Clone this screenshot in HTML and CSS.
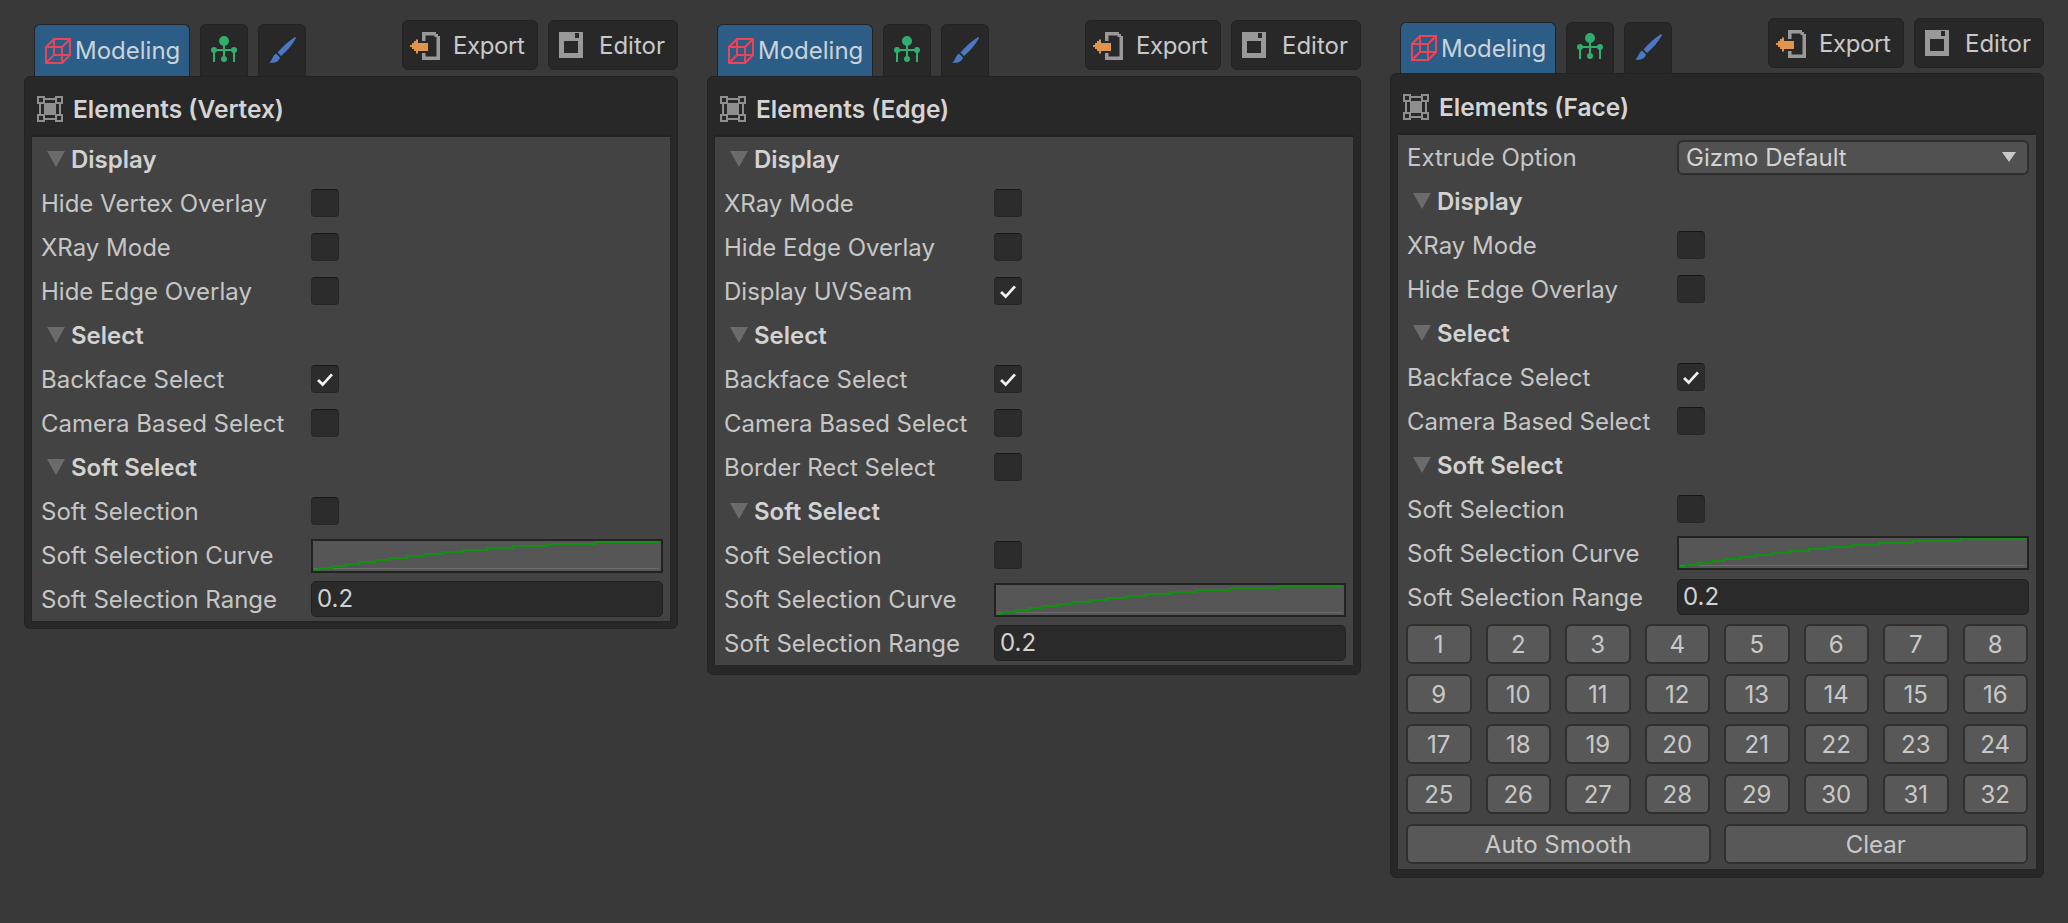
FILE: index.html
```html
<!DOCTYPE html>
<html lang="en">
<head>
<meta charset="utf-8">
<title>Elements</title>
<link rel="stylesheet" href="styles.css">
</head>
<body>
<svg class="defs" aria-hidden="true">
  <symbol id="i-cube" viewBox="0 0 26 26">
    <path d="M1 9H17V25H1ZM9 1H25V17H9ZM1 9L9 1M17 9L25 1M17 25L25 17M1 25L9 17M9 1V17H17" fill="none" stroke="#ea4458" stroke-width="2"/>
  </symbol>
  <symbol id="i-tree" viewBox="0 0 32 32">
    <circle cx="16" cy="6" r="5"/><circle cx="6" cy="15" r="3"/><circle cx="26" cy="15" r="3"/><circle cx="16" cy="24" r="3"/>
    <path d="M6 14H26V16H7V27H5V15ZM15 8H17V24H15ZM25 15H27V27H25Z"/>
  </symbol>
  <symbol id="i-brush" viewBox="0 0 32 32">
    <path d="M29 2C30 2 30 3 29.500 4C26 10 21 16 15 21L11.500 17.500C17 11 23 6 29 2Z"/>
    <path d="M10 18.500L14 22.500C13 27 8 28.500 3 27.500C6 26.500 6.500 20.500 10 18.500Z"/>
  </symbol>
  <symbol id="i-export" viewBox="0 0 32 30">
    <path d="M13 2H27V4H29V6H31V30H13V23H16.500V26.500H27.500V7H25.500V5.500H16.500V11H13Z" fill="#999"/>
    <path d="M1 15H3V13H5V11H7V9.500H9V11H9V13H19V21H9V23.500H7V21H5V19H3V17H1Z" fill="#e0954f"/>
  </symbol>
  <symbol id="i-window" viewBox="0 0 24 26">
    <path fill-rule="evenodd" d="M0 0H24V26H0ZM5 9V21H19V9ZM16 1V6H20V1Z" fill="#999"/>
  </symbol>
  <symbol id="i-elements" viewBox="0 0 26 26">
    <path d="M7 7H19V19H7Z" fill="#8f8f8f"/>
    <path d="M1 1H7V7H1ZM19 1H25V7H19ZM1 19H7V25H1ZM19 19H25V25H19ZM7 3H19M7 23H19M3 7V19M23 7V19" fill="none" stroke="#8f8f8f" stroke-width="2"/>
  </symbol>
  <symbol id="i-curve" viewBox="0 0 348 30" preserveAspectRatio="none">
    <path d="M1 27.500H346" stroke="#6c6c6c" stroke-width="1" fill="none"/>
    <path d="M1 29H6V27H19V25H33V23H46V21H62V19H76V17H94V15H111V13H130V11H150V9H174V7H200V5H234V3H282V1H346" stroke="#138f13" stroke-width="2" fill="none" shape-rendering="crispEdges"/>
  </symbol>
  <symbol id="i-check" viewBox="0 0 28 28">
    <path d="M6.500 15L11.500 20L21.500 9" fill="none" stroke="#f0f0f0" stroke-width="3"/>
  </symbol>
</svg>

<main class="stage">

  <section class="col col-vertex">
    <div class="top">
      <nav class="tabs">
        <div class="tab tab-active"><svg class="ico-cube"><use href="#i-cube"/></svg><span>Modeling</span></div>
        <div class="tab tab-icon"><svg class="ico-tree"><use href="#i-tree"/></svg></div>
        <div class="tab tab-icon"><svg class="ico-brush"><use href="#i-brush"/></svg></div>
      </nav>
      <div class="actions">
        <div class="action action-export"><svg class="ico-export"><use href="#i-export"/></svg><span>Export</span></div>
        <div class="action action-editor"><svg class="ico-window"><use href="#i-window"/></svg><span>Editor</span></div>
      </div>
    </div>
    <div class="panel">
      <header class="panel-head"><svg class="ico-elements"><use href="#i-elements"/></svg><h2>Elements (Vertex)</h2></header>
      <div class="panel-body">
        <div class="section"><i class="tri"></i>Display</div>
        <div class="row"><label>Hide Vertex Overlay</label><span class="check"></span></div>
        <div class="row"><label>XRay Mode</label><span class="check"></span></div>
        <div class="row"><label>Hide Edge Overlay</label><span class="check"></span></div>
        <div class="section"><i class="tri"></i>Select</div>
        <div class="row"><label>Backface Select</label><span class="check"><svg><use href="#i-check"/></svg></span></div>
        <div class="row"><label>Camera Based Select</label><span class="check"></span></div>
        <div class="section"><i class="tri"></i>Soft Select</div>
        <div class="row"><label>Soft Selection</label><span class="check"></span></div>
        <div class="row"><label>Soft Selection Curve</label><span class="curve"><svg><use href="#i-curve"/></svg></span></div>
        <div class="row row-range"><label>Soft Selection Range</label><span class="field">0.2</span></div>
      </div>
    </div>
  </section>

  <section class="col col-edge">
    <div class="top">
      <nav class="tabs">
        <div class="tab tab-active"><svg class="ico-cube"><use href="#i-cube"/></svg><span>Modeling</span></div>
        <div class="tab tab-icon"><svg class="ico-tree"><use href="#i-tree"/></svg></div>
        <div class="tab tab-icon"><svg class="ico-brush"><use href="#i-brush"/></svg></div>
      </nav>
      <div class="actions">
        <div class="action action-export"><svg class="ico-export"><use href="#i-export"/></svg><span>Export</span></div>
        <div class="action action-editor"><svg class="ico-window"><use href="#i-window"/></svg><span>Editor</span></div>
      </div>
    </div>
    <div class="panel">
      <header class="panel-head"><svg class="ico-elements"><use href="#i-elements"/></svg><h2>Elements (Edge)</h2></header>
      <div class="panel-body">
        <div class="section"><i class="tri"></i>Display</div>
        <div class="row"><label>XRay Mode</label><span class="check"></span></div>
        <div class="row"><label>Hide Edge Overlay</label><span class="check"></span></div>
        <div class="row"><label>Display UVSeam</label><span class="check"><svg><use href="#i-check"/></svg></span></div>
        <div class="section"><i class="tri"></i>Select</div>
        <div class="row"><label>Backface Select</label><span class="check"><svg><use href="#i-check"/></svg></span></div>
        <div class="row"><label>Camera Based Select</label><span class="check"></span></div>
        <div class="row"><label>Border Rect Select</label><span class="check"></span></div>
        <div class="section"><i class="tri"></i>Soft Select</div>
        <div class="row"><label>Soft Selection</label><span class="check"></span></div>
        <div class="row"><label>Soft Selection Curve</label><span class="curve"><svg><use href="#i-curve"/></svg></span></div>
        <div class="row row-range"><label>Soft Selection Range</label><span class="field">0.2</span></div>
      </div>
    </div>
  </section>

  <section class="col col-face">
    <div class="top">
      <nav class="tabs">
        <div class="tab tab-active"><svg class="ico-cube"><use href="#i-cube"/></svg><span>Modeling</span></div>
        <div class="tab tab-icon"><svg class="ico-tree"><use href="#i-tree"/></svg></div>
        <div class="tab tab-icon"><svg class="ico-brush"><use href="#i-brush"/></svg></div>
      </nav>
      <div class="actions">
        <div class="action action-export"><svg class="ico-export"><use href="#i-export"/></svg><span>Export</span></div>
        <div class="action action-editor"><svg class="ico-window"><use href="#i-window"/></svg><span>Editor</span></div>
      </div>
    </div>
    <div class="panel">
      <header class="panel-head"><svg class="ico-elements"><use href="#i-elements"/></svg><h2>Elements (Face)</h2></header>
      <div class="panel-body">
        <div class="row"><label>Extrude Option</label><span class="select">Gizmo Default<i class="caret"></i></span></div>
        <div class="section"><i class="tri"></i>Display</div>
        <div class="row"><label>XRay Mode</label><span class="check"></span></div>
        <div class="row"><label>Hide Edge Overlay</label><span class="check"></span></div>
        <div class="section"><i class="tri"></i>Select</div>
        <div class="row"><label>Backface Select</label><span class="check"><svg><use href="#i-check"/></svg></span></div>
        <div class="row"><label>Camera Based Select</label><span class="check"></span></div>
        <div class="section"><i class="tri"></i>Soft Select</div>
        <div class="row"><label>Soft Selection</label><span class="check"></span></div>
        <div class="row"><label>Soft Selection Curve</label><span class="curve"><svg><use href="#i-curve"/></svg></span></div>
        <div class="row row-range"><label>Soft Selection Range</label><span class="field">0.2</span></div>
        <div class="groups">
          <button>1</button><button>2</button><button>3</button><button>4</button><button>5</button><button>6</button><button>7</button><button>8</button>
          <button>9</button><button>10</button><button>11</button><button>12</button><button>13</button><button>14</button><button>15</button><button>16</button>
          <button>17</button><button>18</button><button>19</button><button>20</button><button>21</button><button>22</button><button>23</button><button>24</button>
          <button>25</button><button>26</button><button>27</button><button>28</button><button>29</button><button>30</button><button>31</button><button>32</button>
        </div>
        <div class="wide">
          <button>Auto Smooth</button><button>Clear</button>
        </div>
      </div>
    </div>
  </section>

</main>
</body>
</html>
```

FILE: styles.css
```css
* { box-sizing: border-box; }

html, body {
  margin: 0;
  height: 100%;
  background: #393939;
}

body {
  font-family: Inter, "Noto Sans", sans-serif;
  font-size: 24px;
  color: #c6c6c6;
  overflow: hidden;
}

.defs {
  position: absolute;
  width: 0;
  height: 0;
}

.stage {
  display: flex;
  align-items: flex-start;
  gap: 29px;
  padding-left: 24px;
}

.col {
  width: 654px;
  flex: none;
}

.col-vertex, .col-edge { padding-top: 20px; }
.col-face { padding-top: 18px; }

/* top strip */
.top {
  display: flex;
  justify-content: space-between;
  height: 56px;
}

.col-face .top { height: 55px; }

.tabs {
  display: flex;
  align-items: flex-end;
  gap: 10px;
  padding-left: 10px;
}

.tab {
  height: 52px;
  display: flex;
  align-items: center;
  background: #282828;
  border: 1px solid #232323;
  border-bottom: 0;
  border-radius: 6px 6px 0 0;
}

.col-face .tab { height: 51px; }

.tab-active {
  width: 156px;
  padding-left: 10px;
  gap: 4px;
  background: #2c5d87;
  color: #c9d3db;
}

.tab-icon {
  width: 48px;
  justify-content: center;
}

.ico-cube { width: 26px; height: 26px; flex: none; }
.ico-tree { width: 32px; height: 32px; fill: #2fae70; }
.ico-brush { width: 32px; height: 32px; fill: #4a78c2; }

.actions {
  display: flex;
  gap: 10px;
  height: 50px;
}

.action {
  height: 50px;
  display: flex;
  align-items: center;
  background: #282828;
  border: 1px solid #232323;
  border-radius: 6px;
  color: #c8c8c8;
}

.action-export { width: 136px; padding-left: 6px; gap: 12px; letter-spacing: -0.4px; }
.action-editor { width: 130px; padding-left: 10px; gap: 16px; }

.ico-export { width: 32px; height: 30px; flex: none; }
.ico-window { width: 24px; height: 26px; flex: none; }

/* panel */
.panel {
  background: #282828;
  border: 1px solid #232323;
  border-radius: 6px;
  padding: 0 7px 8px;
}

.col-vertex .panel { padding-bottom: 7px; }
.col-edge .panel { padding-bottom: 9px; }

.panel-head {
  height: 59px;
  display: flex;
  align-items: center;
  gap: 10px;
  padding: 6px 5px 0;
}

.col-vertex .panel-head, .col-edge .panel-head {
  height: 58px;
  padding-top: 5px;
}

.ico-elements { width: 26px; height: 26px; flex: none; }

h2 {
  margin: 0;
  font-size: 24.500px;
  font-weight: 600;
  color: #d4d4d4;
}

.panel-body {
  background: #434343;
  border-top: 2px solid #232323;
  box-shadow: 0 0 0 1px #252525;
}

.row, .section {
  height: 44px;
  display: flex;
  align-items: center;
  padding: 0 7px 0 9px;
}

.row label {
  width: 270px;
  flex: none;
}

.row-range {
  padding-top: 4px;
  padding-bottom: 4px;
}

.section {
  font-weight: 600;
  color: #d2d2d2;
}

.tri {
  width: 0;
  height: 0;
  margin-left: 6px;
  margin-right: 6px;
  border-style: solid;
  border-width: 16px 9px 0;
  border-color: #6b6b6b transparent transparent;
}

.check {
  width: 28px;
  height: 28px;
  flex: none;
  background: #2c2c2c;
  border: 1px solid #272727;
  border-top-color: #171717;
  border-radius: 4px;
  display: flex;
}

.check svg { width: 100%; height: 100%; }

.curve {
  width: 352px;
  height: 34px;
  flex: none;
  background: #565656;
  border: 2px solid #232323;
  display: flex;
}

.col-vertex .curve, .col-edge .curve { margin-top: 2px; }

.curve svg { width: 100%; height: 100%; }

.field {
  width: 352px;
  height: 36px;
  flex: none;
  line-height: 34px;
  padding: 0 5px;
  background: #2a2a2a;
  border: 1px solid #212121;
  border-radius: 5px;
  color: #d2d2d2;
}

.select {
  width: 352px;
  height: 35px;
  flex: none;
  display: flex;
  align-items: center;
  justify-content: space-between;
  padding: 0 7px;
  background: #515151;
  border: 2px solid #2e2e2e;
  border-radius: 6px;
  color: #d2d2d2;
}

.caret {
  width: 0;
  height: 0;
  margin-right: 4px;
  border-style: solid;
  border-width: 10px 7px 0;
  border-color: #c8c8c8 transparent transparent;
}

.groups {
  display: grid;
  grid-template-columns: repeat(8, 1fr);
  gap: 10px 14px;
  padding: 5px 8px 0;
}

.wide {
  display: grid;
  grid-template-columns: 1fr 1fr;
  gap: 13px;
  padding: 10px 8px 5px;
}

button {
  height: 40px;
  padding: 0;
  background: #585858;
  border: 2px solid #303030;
  border-radius: 6px;
  color: #c8c8c8;
  font: inherit;
}
```
